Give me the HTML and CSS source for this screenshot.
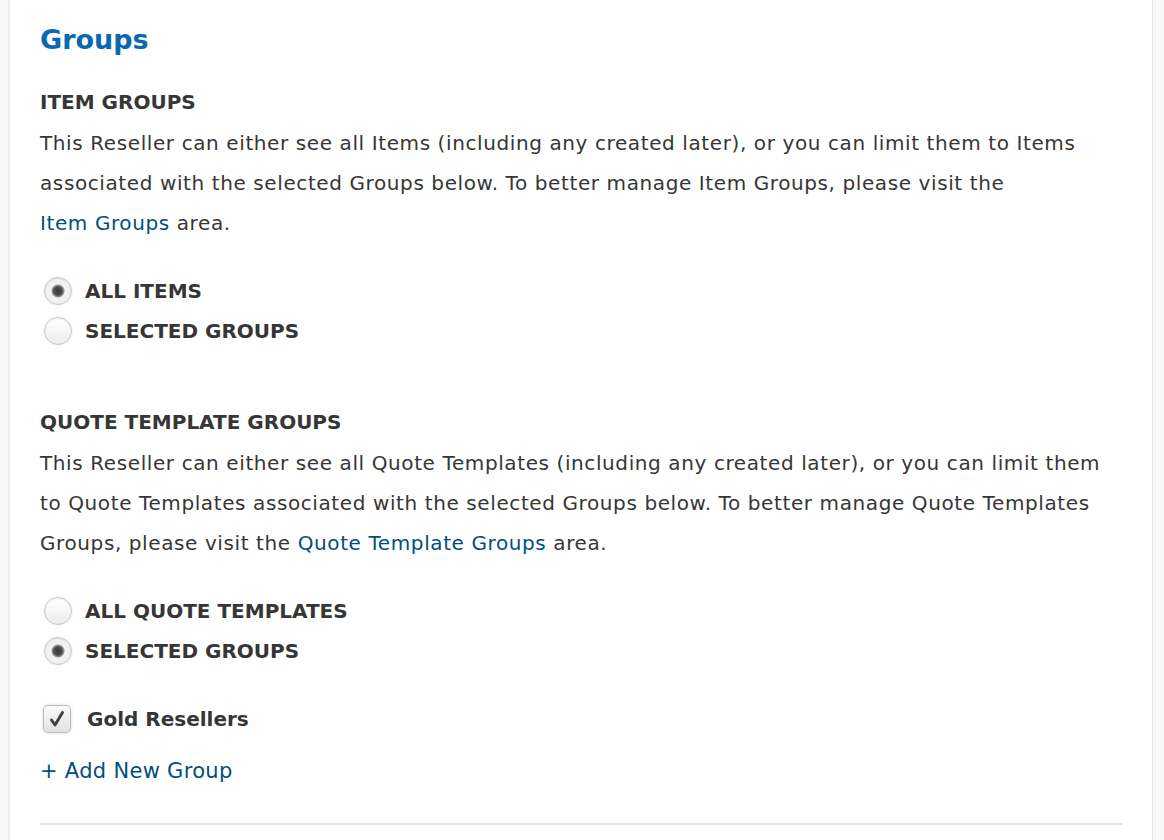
FILE: index.html
```html
<!DOCTYPE html>
<html lang="en">

<head>
    <meta charset="UTF-8">
    <meta name="viewport" content="width=device-width, initial-scale=1.0">
    <title>Groups</title>
    <link rel="stylesheet" href="styles.css">
</head>

<body>
    <div class="panel">
        <h1>Groups</h1>

        <div class="group-section">
            <h3>Item Groups</h3>
            <p>This Reseller can either see all Items (including any created later), or you can limit them to Items associated with the selected Groups below. To better manage Item Groups, please visit the <a href="#">Item Groups</a> area.</p>

            <div class="options">
                <label class="option"><input type="radio" name="items" checked> All Items</label>
                <label class="option"><input type="radio" name="items"> Selected Groups</label>
            </div>
        </div>

        <div class="group-section">
            <h3>Quote Template Groups</h3>
            <p>This Reseller can either see all Quote Templates (including any created later), or you can limit them to Quote Templates associated with the selected Groups below. To better manage Quote Templates Groups, please visit the <a href="#">Quote Template Groups</a> area.</p>

            <div class="options">
                <label class="option"><input type="radio" name="templates"> All Quote Templates</label>
                <label class="option"><input type="radio" name="templates" checked> Selected Groups</label>
            </div>

            <label class="check-row">
                <span class="checkbox">
                    <svg width="18" height="18" viewBox="0 0 18 18">
                        <path d="M3.5 10 L7 15 L14.5 2.5" fill="none" stroke="#444" stroke-width="3" stroke-linecap="round" stroke-linejoin="round" />
                    </svg>
                </span>
                Gold Resellers
            </label>

            <a href="#" class="add-group">+ Add New Group</a>
        </div>

        <hr>
    </div>
</body>

</html>
```

FILE: styles.css
```css
body {
    margin: 0;
    background-color: #f7f7f7;
    font-family: "DejaVu Sans", sans-serif;
    color: #363636;
}

.panel {
    margin-left: 8px;
    min-height: 840px;
    box-sizing: border-box;
    width: 1145px;
    padding: 20px 30px 0 30px;
    background-color: #ffffff;
    border-left: 2px solid #ececec;
    border-right: 1px solid #e2e2e2;
}

h1 {
    margin: 0 0 22px 0;
    font-size: 27px;
    line-height: 40px;
    color: #0b67b2;
}

h3 {
    margin: 0;
    font-size: 20px;
    line-height: 40px;
    text-transform: uppercase;
    font-weight: bold;
}

p {
    margin: 1px 0 0 0;
    font-size: 20px;
    line-height: 40px;
    letter-spacing: 0.6px;
}

p a {
    white-space: nowrap;
}

a {
    color: #004f80;
    text-decoration: none;
}

.options {
    margin-top: 28px;
    margin-bottom: 51px;
}

.option {
    display: flex;
    align-items: center;
    gap: 13px;
    height: 40px;
    padding-left: 4px;
    font-size: 20px;
    font-weight: bold;
    text-transform: uppercase;
}

.option input {
    appearance: none;
    margin: 0;
    width: 28px;
    height: 28px;
    border-radius: 50%;
    border: 1px solid #c9c9c9;
    background: linear-gradient(#ffffff, #ececec);
    box-shadow: 0 0 2px rgba(0, 0, 0, 0.12), inset 0 1px 2px rgba(0, 0, 0, 0.05);
}

.option input:checked {
    background: radial-gradient(circle, #3c3c3c 0, #4a4a4a 4px, #9a9a9a 6px, #f4f4f4 7px, #e9e9e9 100%);
}

.group-section:last-of-type .options {
    margin-bottom: 28px;
}

.check-row {
    display: flex;
    align-items: center;
    gap: 16px;
    height: 40px;
    padding-left: 3px;
    font-size: 20px;
    font-weight: bold;
}

.checkbox {
    display: flex;
    align-items: center;
    justify-content: center;
    width: 26px;
    height: 26px;
    border: 1px solid #bdbdbd;
    border-radius: 5px;
    background: linear-gradient(#fbfbfb, #e2e2e2);
    box-shadow: 0 0 3px rgba(0, 0, 0, 0.18);
}

.add-group {
    display: block;
    margin-top: 12px;
    font-size: 21px;
    line-height: 40px;
    letter-spacing: 0.3px;
}

hr {
    margin: 32px 0 0 0;
    border: none;
    border-top: 2px solid #e2e2e2;
}
```
